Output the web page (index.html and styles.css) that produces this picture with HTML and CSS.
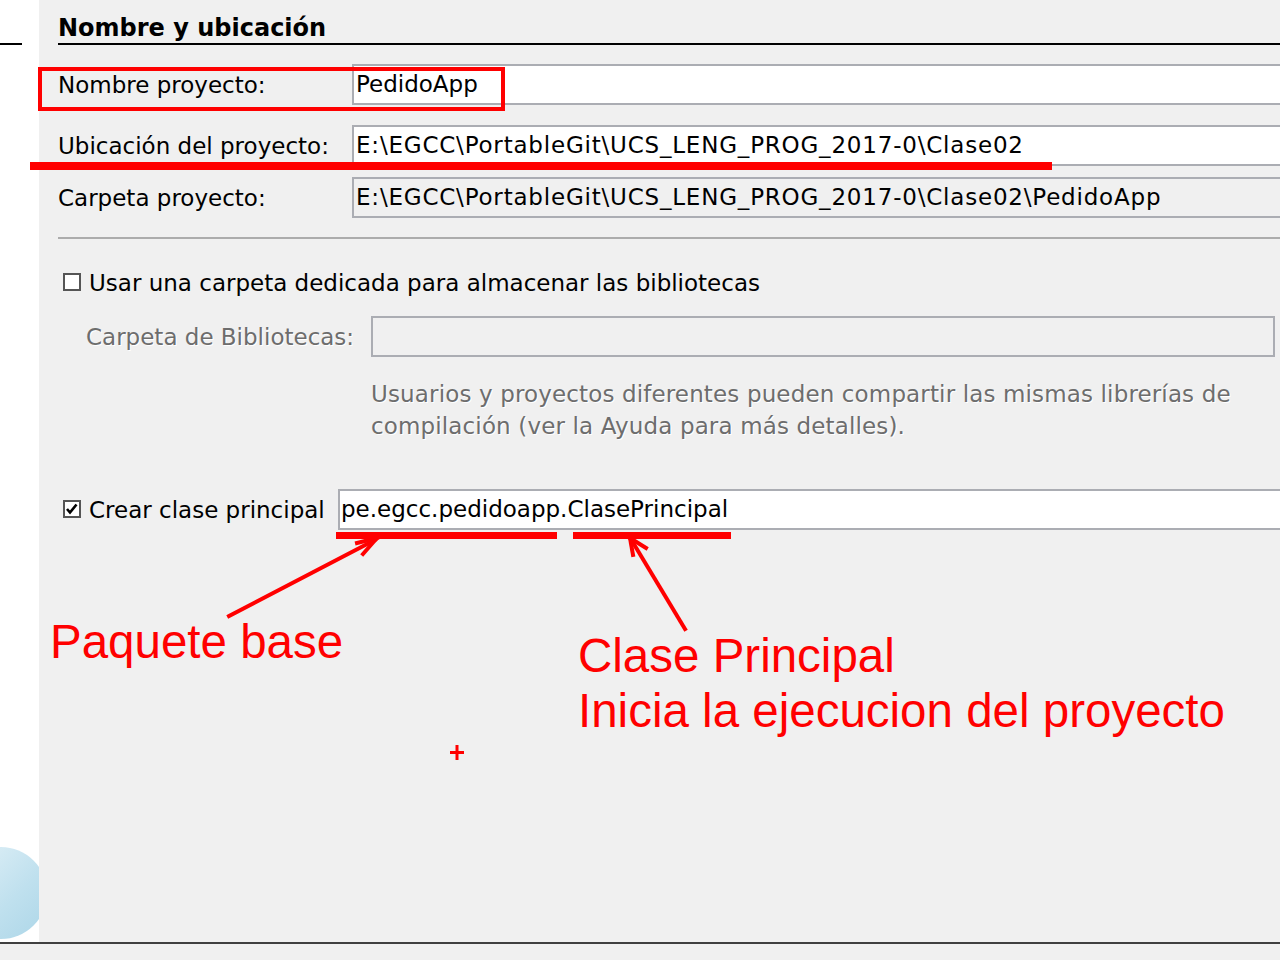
FILE: index.html
```html
<!DOCTYPE html>
<html lang="es">
<head>
<meta charset="utf-8">
<title>Nombre y ubicación</title>
<link rel="stylesheet" href="styles.css">
</head>
<body>
<div class="page">
  <div class="main">
    <aside class="strip">
      <div class="strip-rule"></div>
      <svg class="orb" width="39" height="95" viewBox="0 0 39 95">
        <defs>
          <linearGradient id="orbg" x1="0" y1="0" x2="1" y2="1">
            <stop offset="0" stop-color="#e4f2f8"/>
            <stop offset="0.6" stop-color="#bfe0ee"/>
            <stop offset="1" stop-color="#acd6e8"/>
          </linearGradient>
        </defs>
        <circle cx="1" cy="46" r="46" fill="url(#orbg)"/>
      </svg>
    </aside>
    <section class="panel">
      <h2 class="title">Nombre y ubicación</h2>
      <div class="row row-name">
        <label class="lbl">Nombre proyecto:</label>
        <div class="field">PedidoApp</div>
      </div>
      <div class="row row-loc">
        <label class="lbl">Ubicación del proyecto:</label>
        <div class="field field-path">E:\EGCC\PortableGit\UCS_LENG_PROG_2017-0\Clase02</div>
      </div>
      <div class="row row-folder">
        <label class="lbl">Carpeta proyecto:</label>
        <div class="field field-path field-disabled">E:\EGCC\PortableGit\UCS_LENG_PROG_2017-0\Clase02\PedidoApp</div>
      </div>
      <div class="sep"></div>
      <div class="check-row">
        <svg class="cbox" width="18" height="18" viewBox="0 0 18 18"><rect x="1" y="1" width="16" height="16" fill="#fff" stroke="#555" stroke-width="2"/></svg>
        <span>Usar una carpeta dedicada para almacenar las bibliotecas</span>
      </div>
      <div class="lib-row">
        <label class="lbl-dis">Carpeta de Bibliotecas:</label>
        <div class="field field-lib"></div>
      </div>
      <p class="hint">Usuarios y proyectos diferentes pueden compartir las mismas librerías de<br>compilación (ver la Ayuda para más detalles).</p>
      <div class="main-row">
        <div class="check-label">
          <svg class="cbox" width="18" height="18" viewBox="0 0 18 18"><rect x="1" y="1" width="16" height="16" fill="#fff" stroke="#555" stroke-width="2"/><path d="M4 9 L7 12.5 L13.5 4.5" fill="none" stroke="#000" stroke-width="2.6"/></svg>
          <span>Crear clase principal</span>
        </div>
        <div class="field field-main">pe.egcc.pedidoapp.ClasePrincipal</div>
      </div>
    </section>
  </div>
  <div class="statusbar"></div>

  <div class="annotations">
    <div class="mark-box"></div>
    <div class="mark-line mark-loc"></div>
    <div class="mark-line mark-pkg"></div>
    <div class="mark-line mark-cls"></div>
    <svg class="arrows" width="1280" height="960" viewBox="0 0 1280 960">
      <g stroke="#ff0000" stroke-width="4" fill="none" stroke-linecap="square">
        <line x1="229" y1="616" x2="375" y2="540"/>
        <line x1="377" y1="538" x2="357" y2="543"/>
        <line x1="377" y1="538" x2="363" y2="554"/>
        <line x1="685" y1="629" x2="632" y2="541"/>
        <line x1="630" y1="538" x2="633" y2="555"/>
        <line x1="630" y1="538" x2="646" y2="548"/>
        <line x1="450" y1="752.5" x2="464" y2="752.5" stroke-width="3" stroke-linecap="butt"/>
        <line x1="457" y1="745" x2="457" y2="760" stroke-width="3" stroke-linecap="butt"/>
      </g>
    </svg>
    <div class="note note-pkg">Paquete base</div>
    <div class="note note-cls">Clase Principal<br>Inicia la ejecucion del proyecto</div>
  </div>
</div>
</body>
</html>
```

FILE: styles.css
```css
html, body {
  margin: 0;
  padding: 0;
}

body {
  width: 1280px;
  height: 960px;
  overflow: hidden;
  background: #f0f0f0;
  font-family: "DejaVu Sans", "Liberation Sans", sans-serif;
  font-size: 23px;
  color: #000;
}

.page {
  position: relative;
  width: 1280px;
  height: 960px;
  display: flex;
  flex-direction: column;
}

.main {
  display: flex;
  height: 942px;
}

.strip {
  width: 39px;
  flex: 0 0 39px;
  background: #fff;
  display: flex;
  flex-direction: column;
  overflow: hidden;
}

.strip-rule {
  margin-top: 43px;
  width: 22px;
  height: 2px;
  background: #000;
}

.orb {
  display: block;
  margin-top: auto;
}

.panel {
  flex: 1;
  background: #f0f0f0;
  padding-left: 19px;
  overflow: hidden;
}

.title {
  margin: 0;
  padding: 14px 0 1px;
  font-size: 24px;
  font-weight: bold;
  line-height: 28px;
  border-bottom: 2px solid #000;
}

.row {
  display: grid;
  grid-template-columns: 294px 1fr;
  align-items: center;
}

.row-name { margin-top: 19px; }
.row-loc { margin-top: 20px; }
.row-folder { margin-top: 11px; }

.lbl {
  line-height: 28px;
  white-space: nowrap;
}

.field {
  box-sizing: border-box;
  height: 41px;
  border: 2px solid #abadb3;
  border-right: none;
  background: #fff;
  padding-left: 2px;
  line-height: 37px;
  white-space: nowrap;
  overflow: hidden;
}

.field-path {
  letter-spacing: 0.8px;
}

.field-disabled {
  background: #f0f0f0;
}

.sep {
  margin-top: 19px;
  height: 2px;
  background: #acacac;
}

.check-row {
  margin-top: 30px;
  display: flex;
  align-items: center;
  line-height: 28px;
  padding-left: 5px;
  white-space: nowrap;
}

.cbox {
  display: block;
  flex: 0 0 18px;
  margin-right: 8px;
  margin-bottom: 2px;
}

.lib-row {
  margin-top: 19px;
  display: grid;
  grid-template-columns: 285px 904px;
  align-items: center;
  padding-left: 28px;
}

.lbl-dis {
  line-height: 28px;
  color: #6d6d6d;
  text-shadow: 1px 1px 0 #fff;
  white-space: nowrap;
}

.field-lib {
  background: #f0f0f0;
  border-right: 2px solid #abadb3;
}

.hint {
  margin: 21px 0 0;
  padding-left: 313px;
  line-height: 32px;
  letter-spacing: 0.14px;
  color: #6d6d6d;
  text-shadow: 1px 1px 0 #fff;
  white-space: nowrap;
}

.main-row {
  margin-top: 47px;
  display: grid;
  grid-template-columns: 280px 1fr;
  align-items: center;
}

.check-label {
  display: flex;
  align-items: center;
  padding-left: 5px;
  line-height: 28px;
  white-space: nowrap;
}

.field-main {
  padding-left: 1px;
}

.statusbar {
  flex: 1;
  border-top: 2px solid #404040;
  background: #f0f0f0;
}

/* annotations drawn over the screenshot */
.annotations {
  position: absolute;
  left: 0;
  top: 0;
  width: 1280px;
  height: 960px;
  pointer-events: none;
}

.mark-box {
  position: absolute;
  left: 38px;
  top: 67px;
  width: 467px;
  height: 44px;
  box-sizing: border-box;
  border: 4px solid #ff0000;
}

.mark-line {
  position: absolute;
  background: #ff0000;
}

.mark-loc { left: 30px; top: 162px; width: 1022px; height: 8px; }
.mark-pkg { left: 336px; top: 532px; width: 221px; height: 7px; }
.mark-cls { left: 573px; top: 532px; width: 158px; height: 7px; }

.arrows {
  position: absolute;
  left: 0;
  top: 0;
}

.note {
  position: absolute;
  font-family: "Liberation Sans", Arial, sans-serif;
  font-size: 47.5px;
  color: #ff0000;
  white-space: nowrap;
}

.note-pkg {
  left: 50px;
  top: 618px;
  line-height: 48px;
}

.note-cls {
  left: 578px;
  top: 628px;
  line-height: 55px;
}
```
